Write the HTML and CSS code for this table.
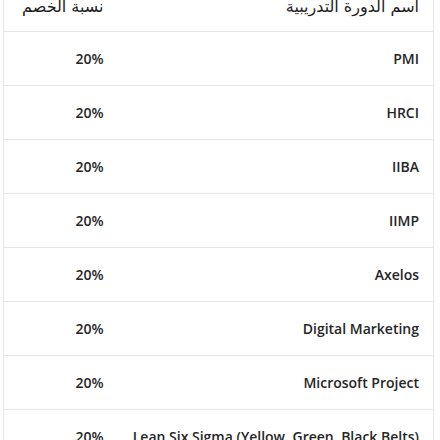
FILE: index.html
```html
<!DOCTYPE html>
<html lang="ar" dir="rtl">
<head>
<meta charset="utf-8">
<link rel="stylesheet" href="styles.css">
</head>
<body>
<div class="wrap">
<table class="courses">
<colgroup><col class="col-name"><col class="col-disc"></colgroup>
<thead>
<tr><th class="name">اسم الدورة التدريبية</th><th class="disc">نسبة الخصم</th></tr>
</thead>
<tbody>
<tr><td class="name">PMI</td><td class="disc">20%</td></tr>
<tr><td class="name">HRCI</td><td class="disc">20%</td></tr>
<tr><td class="name">IIBA</td><td class="disc">20%</td></tr>
<tr><td class="name">IIMP</td><td class="disc">20%</td></tr>
<tr><td class="name">Axelos</td><td class="disc">20%</td></tr>
<tr><td class="name">Digital Marketing</td><td class="disc">20%</td></tr>
<tr><td class="name">Microsoft Project</td><td class="disc">20%</td></tr>
<tr><td class="name">Lean Six Sigma (Yellow, Green, Black Belts)</td><td class="disc">20%</td></tr>
</tbody>
</table>
</div>
</body>
</html>
```
FILE: styles.css
```css
html, body {
  margin: 0;
  padding: 0;
  background: #ffffff;
}
.wrap {
  padding: 0 6px 0 3px;
  overflow: hidden;
  height: 440px;
}
.courses {
  width: 431px;
  margin-top: -23px;
  table-layout: fixed;
  border-collapse: collapse;
  border: 1px solid #e6e6e6;
  font-family: "Open Sans", "DejaVu Sans", sans-serif;
  color: #262626;
}
.col-disc {
  width: 114px;
}
.courses th,
.courses td {
  text-align: right;
  padding: 0 14px;
  height: 53px;
  border-bottom: 1px solid #e6e6e6;
  vertical-align: middle;
  white-space: nowrap;
}
.courses th {
  font-family: "DejaVu Sans", sans-serif;
  font-size: 16px;
  font-weight: 400;
  color: #1e1e1e;
  padding-top: 4px;
  height: 49px;
}
.courses td {
  font-size: 14px;
  font-weight: 600;
}
```
